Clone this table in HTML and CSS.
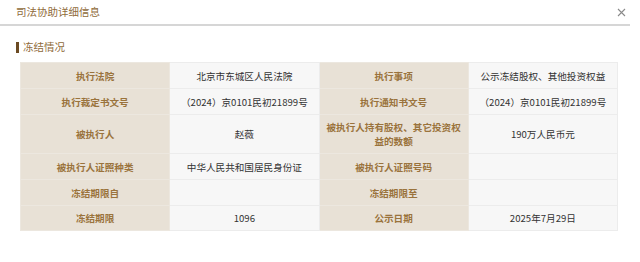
FILE: index.html
```html
<!DOCTYPE html>
<html lang="zh-CN">
<head>
<meta charset="utf-8">
<title>司法协助详细信息</title>
<link rel="stylesheet" href="styles.css">
</head>
<body>
<div class="dialog">
  <div class="dialog-header">
    <span class="dialog-title">司法协助详细信息</span>
    <span class="close" aria-label="关闭">
      <svg width="9" height="9" viewBox="0 0 9 9"><path d="M1 1L8 8M8 1L1 8" stroke="#8a8a8a" stroke-width="1.1" fill="none"/></svg>
    </span>
  </div>
  <div class="dialog-body">
    <div class="section-title"><span class="bar"></span>冻结情况</div>
    <table class="info">
      <tbody>
        <tr>
          <td class="label">执行法院</td><td class="value">北京市东城区人民法院</td>
          <td class="label">执行事项</td><td class="value">公示冻结股权、其他投资权益</td>
        </tr>
        <tr>
          <td class="label">执行裁定书文号</td><td class="value">（2024）京0101民初21899号</td>
          <td class="label">执行通知书文号</td><td class="value">（2024）京0101民初21899号</td>
        </tr>
        <tr class="tall">
          <td class="label">被执行人</td><td class="value">赵薇</td>
          <td class="label">被执行人持有股权、其它投资权益的数额</td><td class="value">190万人民币元</td>
        </tr>
        <tr>
          <td class="label">被执行人证照种类</td><td class="value">中华人民共和国居民身份证</td>
          <td class="label">被执行人证照号码</td><td class="value"></td>
        </tr>
        <tr>
          <td class="label">冻结期限自</td><td class="value"></td>
          <td class="label">冻结期限至</td><td class="value"></td>
        </tr>
        <tr class="last">
          <td class="label">冻结期限</td><td class="value">1096</td>
          <td class="label">公示日期</td><td class="value">2025年7月29日</td>
        </tr>
      </tbody>
    </table>
  </div>
</div>
</body>
</html>
```
FILE: styles.css
```css
html, body {
  margin: 0;
  padding: 0;
  background: #ffffff;
}
body {
  font-family: "Microsoft YaHei", "Noto Sans CJK SC", "Noto Sans", sans-serif;
  color: #333333;
}
.dialog {
  width: 630px;
}
.dialog-header {
  height: 24px;
  border-bottom: 2px solid #d6d6d6;
  display: flex;
  align-items: center;
  justify-content: space-between;
  padding: 0 4px 0 16px;
}
.dialog-title {
  font-size: 10.5px;
  line-height: 14px;
  color: #8f6b3a;
}
.close {
  display: flex;
  align-items: center;
  justify-content: center;
  width: 10px;
  height: 10px;
}
.dialog-body {
  padding: 14px 12px 0 20px;
}
.section-title {
  display: flex;
  align-items: center;
  font-size: 10.5px;
  line-height: 14px;
  color: #8f6b3a;
  margin-left: -4px;
  height: 14px;
}
.bar {
  width: 3px;
  height: 11px;
  background: #6b4a22;
  margin-right: 4px;
}
.info {
  margin-top: 8px;
  width: 598px;
  border-collapse: collapse;
  table-layout: fixed;
  font-size: 9.6px;
  line-height: 14px;
}
.info td {
  border: 1px solid #ececec;
  height: 26px;
  padding: 0 6px;
  text-align: center;
  vertical-align: middle;
  box-sizing: border-box;
}
.info tr.tall td {
  height: 39px;
}
.info tr.last td {
  height: 25px;
}
.info td.label {
  background: #e8e1d6;
  color: #9a733c;
  font-weight: bold;
  border-color: #ece7df;
}
.info td.value {
  background: #f7f7f7;
  color: #333333;
}
```
